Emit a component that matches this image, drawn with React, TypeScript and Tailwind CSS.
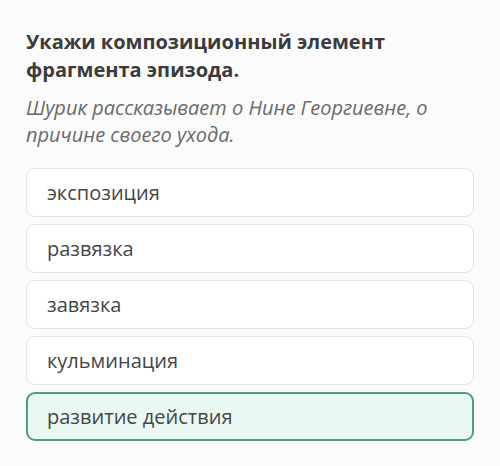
import React from 'react';

const options = ['экспозиция', 'развязка', 'завязка', 'кульминация', 'развитие действия'];
const selected = 4;

const App: React.FC = () => {
  return (
    <div
      className="min-h-[466px] w-[500px] bg-[#fbfbfb] px-[26px] pt-[28px]"
      style={{ fontFamily: '"Open Sans", "Noto Sans", sans-serif' }}
    >
      <h1 className="text-[20px] font-bold leading-[28px] text-[#3b3b3b]">
        Укажи композиционный элемент фрагмента эпизода.
      </h1>
      <p className="mt-[10px] pr-[20px] text-[20px] italic leading-[27px] text-[#6a6a6a]">
        Шурик рассказывает о Нине Георгиевне, о причине своего ухода.
      </p>

      <div className="mt-[20px] flex flex-col gap-[7px]">
        {options.map((opt, i) => (
          <div
            key={opt}
            className={
              i === selected
                ? 'rounded-[9px] border-2 border-[#4f9a89] bg-[#eaf8f3] px-[19px] py-[9px] text-[20px] leading-[27px] text-[#464646]'
                : 'rounded-[9px] border border-[#e4e4e4] bg-white px-[20px] py-[10px] text-[20px] leading-[27px] text-[#464646]'
            }
          >
            {opt}
          </div>
        ))}
      </div>
    </div>
  );
};

export default App;
